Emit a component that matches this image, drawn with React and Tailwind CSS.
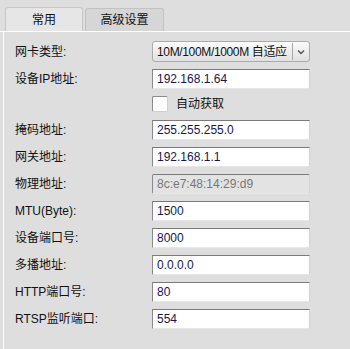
import React from "react";

const font = { fontFamily: '"Liberation Sans", "Noto Sans CJK SC", sans-serif' };

const rows = [
  { label: "掩码地址:", value: "255.255.255.0" },
  { label: "网关地址:", value: "192.168.1.1" },
  { label: "物理地址:", value: "8c:e7:48:14:29:d9", disabled: true },
  { label: "MTU(Byte):", value: "1500" },
  { label: "设备端口号:", value: "8000" },
  { label: "多播地址:", value: "0.0.0.0" },
  { label: "HTTP端口号:", value: "80" },
  { label: "RTSP监听端口:", value: "554" },
];

const Field = ({ value, disabled }) => (
  <div
    className={`w-[158px] h-[20px] flex items-center pl-[4px] border border-t-[#7a7a7a] border-l-[#8a8a8a] border-r-[#d4d4d4] border-b-[#e6e6e6] text-[12px] ${
      disabled ? "bg-[#e3e3e3] text-[#777] rounded-[2px]" : "bg-white text-[#17174a]"
    }`}
  >
    {value}
  </div>
);

const Row = ({ label, children, h = "h-[27px]" }) => (
  <div className={`flex items-center ${h}`}>
    <div className="w-[137px] text-[12px] text-[#111]">{label}</div>
    {children}
  </div>
);

export default function App() {
  return (
    <div className="w-[350px] h-[349px] bg-[#dedede] flex flex-col" style={font}>
      {/* tabs */}
      <div className="flex gap-[2px] pl-[5px] pt-[7px] border-b border-white">
        <div className="w-[78px] h-[24px] -mb-px relative bg-[#e6e6e6] border border-b-0 border-[#c6c6c6] rounded-t-[3px] flex items-center justify-center text-[12px] text-[#111]">
          常用
        </div>
        <div className="w-[79px] h-[23px] bg-[#d6d6d6] border border-b-0 border-[#c2c2c2] rounded-t-[3px] flex items-center justify-center text-[12px] text-[#111] mt-px">
          高级设置
        </div>
      </div>

      {/* panel */}
      <div className="flex-1 ml-[3px] border-l border-white pl-[11px] pt-[6px]">
        <Row label="网卡类型:">
          <div className="w-[158px] h-[21px] flex items-center rounded-[3px] border border-[#ababab] bg-gradient-to-b from-[#fbfbfb] to-[#e0e0e0] text-[12px] text-[#111]">
            <div className="flex-1 pl-[4px] whitespace-nowrap overflow-hidden tracking-[-0.35px]">10M/100M/1000M 自适应</div>
            <div className="w-px h-[17px] bg-[#a8a8a8]" />
            <div className="w-[16px] flex justify-center">
              <svg width="8" height="6" viewBox="0 0 8 6">
                <path d="M1 1.5 L4 4.5 L7 1.5" stroke="#555" strokeWidth="1.4" fill="none" />
              </svg>
            </div>
          </div>
        </Row>
        <Row label="设备IP地址:">
          <Field value="192.168.1.64" />
        </Row>
        <Row label="" h="h-[24px]">
          <div className="flex items-center">
            <div className="w-[16px] h-[16px] bg-white border border-t-[#8a8a8a] border-l-[#8a8a8a] border-r-[#d0d0d0] border-b-[#d0d0d0] rounded-[2px]" />
            <span className="ml-[8px] text-[12px] text-[#111]">自动获取</span>
          </div>
        </Row>
        {rows.map((r) => (
          <Row key={r.label} label={r.label}>
            <Field value={r.value} disabled={r.disabled} />
          </Row>
        ))}
      </div>
    </div>
  );
}
